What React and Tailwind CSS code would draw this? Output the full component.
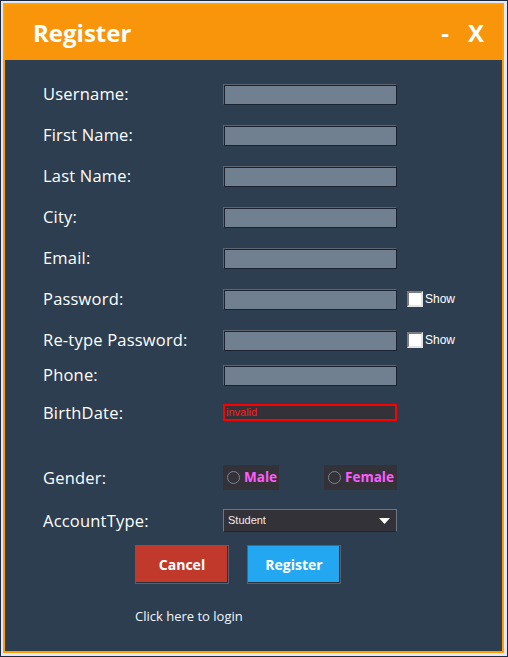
import { useState } from 'react';

const sans = { fontFamily: '"Open Sans", "Noto Sans", sans-serif' };

function Field() {
  return (
    <div className="w-[174px] h-[21px] bg-[#708090] border border-t-[#5e656f] border-l-[#5e656f] border-b-[#1b2230] border-r-[#1b2230] shadow-[inset_1px_1px_0_#1b2230]" />
  );
}

function ShowBox() {
  return (
    <div className="flex items-center ml-[10px]">
      <div className="w-[16px] h-[16px] bg-white border-2 border-t-[#7c7c7c] border-l-[#7c7c7c] border-b-[#e4e4e4] border-r-[#e4e4e4]" />
      <span className="ml-[2px] text-[12px] text-white font-['Liberation_Sans',sans-serif]">Show</span>
    </div>
  );
}

function Row({ label, className, children }) {
  return (
    <div className={`flex items-center ${className}`}>
      <div className="w-[180px] text-[16.5px] tracking-[0.2px] text-white leading-[20px]">{label}</div>
      {children}
    </div>
  );
}

function Radio({ label, width }) {
  return (
    <div className={`flex items-center h-[25px] bg-[#343239] pl-[4px] ${width}`}>
      <div className="w-[13px] h-[13px] rounded-full border border-[#7d8490]" />
      <span className="ml-[4px] text-[13.5px] font-bold text-[#ff5cff]">{label}</span>
    </div>
  );
}

export default function App() {
  const [account] = useState('Student');

  return (
    <div className="w-[508px] h-[657px] bg-[#1d2a3c] p-px" style={sans}>
      <div className="w-full h-full bg-[#e6e6fa] pl-[2px] pt-[2px] pr-[3px] pb-[3px]">
        <div className="w-full h-full border-2 border-[#ffa000] flex flex-col">
          <div className="h-[55px] bg-[#f8950a] flex items-center justify-between pl-[28px] pr-[18px] text-white font-bold text-[24px]">
            <span>Register</span>
            <div className="flex items-center">
              <span>-</span>
              <span className="ml-[19px]">X</span>
            </div>
          </div>

          <div className="flex-1 bg-[#2c3e50] pl-[38px] flex flex-col">
            <Row label="Username:" className="mt-[24px] h-[20px]"><Field /></Row>
            <Row label="First Name:" className="mt-[21px] h-[20px]"><Field /></Row>
            <Row label="Last Name:" className="mt-[21px] h-[20px]"><Field /></Row>
            <Row label="City:" className="mt-[21px] h-[20px]"><Field /></Row>
            <Row label="Email:" className="mt-[21px] h-[20px]"><Field /></Row>
            <Row label="Password:" className="mt-[21px] h-[20px]"><Field /><ShowBox /></Row>
            <Row label="Re-type Password:" className="mt-[21px] h-[20px]"><Field /><ShowBox /></Row>
            <Row label="Phone:" className="mt-[15px] h-[20px]"><Field /></Row>
            <Row label="BirthDate:" className="mt-[19px] h-[17px]">
              <div className="w-[174px] h-[17px] bg-[#333238] border-2 border-[#ff0000] flex items-center pl-px text-[11px] leading-none text-[#ff1a1a] font-['Liberation_Sans',sans-serif]">
                invalid
              </div>
            </Row>
            <Row label="Gender:" className="mt-[44px] h-[25px]">
              <Radio label="Male" width="w-[56px]" />
              <div className="ml-[45px]">
                <Radio label="Female" width="w-[73px]" />
              </div>
            </Row>
            <Row label="AccountType:" className="mt-[19px] h-[23px]">
              <div className="w-[174px] h-[23px] bg-[#333238] border border-t-[#6f7580] border-l-[#6f7580] border-b-[#1d2533] border-r-[#6f7580] flex items-center justify-between pl-[4px] pr-[6px]">
                <span className="text-[11px] text-[#ececec] font-['Liberation_Sans',sans-serif]">{account}</span>
                <svg width="11" height="6" viewBox="0 0 11 6">
                  <polygon points="0,0 11,0 5.5,6" fill="#ffffff" />
                </svg>
              </div>
            </Row>

            <div className="flex mt-[13px] ml-[92px] gap-[18px]">
              <button className="w-[94px] h-[39px] bg-[#c0392b] border border-[#5a616c] shadow-[inset_-1px_-1px_0_#2a3140] text-white font-bold text-[14px]">
                Cancel
              </button>
              <button className="w-[94px] h-[39px] bg-[#22a7f0] border border-[#5a616c] shadow-[inset_-1px_-1px_0_#2a3140] text-white font-bold text-[14px]">
                Register
              </button>
            </div>

            <p className="mt-[22px] ml-[92px] text-[13px] leading-[20px] text-[#f2f6fa]">
              Click here to login
            </p>
          </div>
        </div>
      </div>
    </div>
  );
}
